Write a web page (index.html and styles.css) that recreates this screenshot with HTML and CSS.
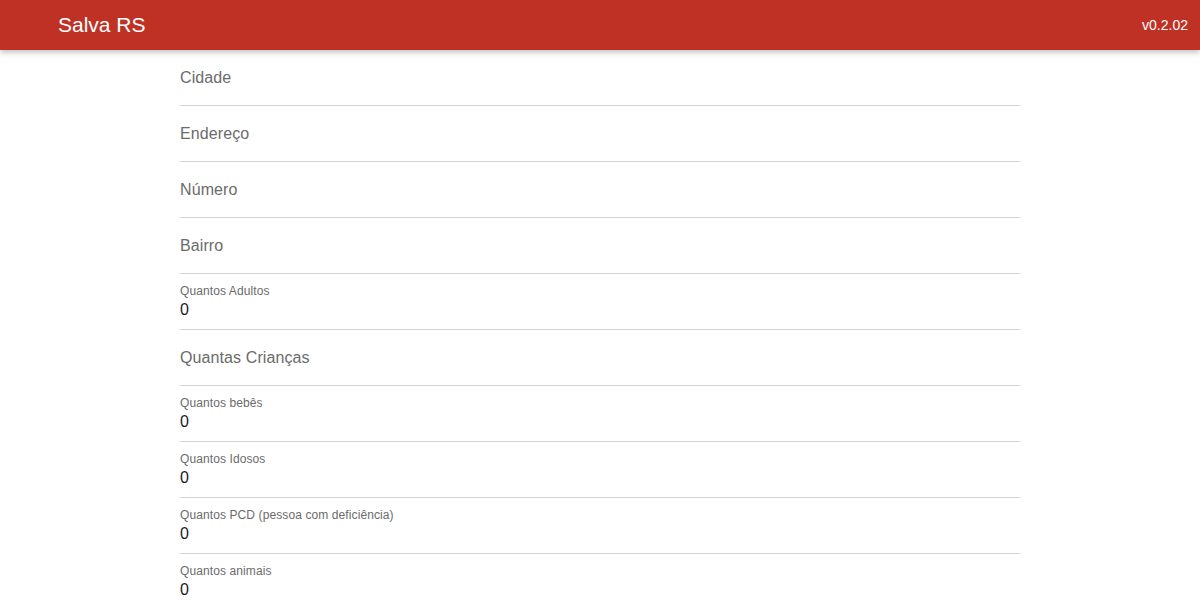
FILE: index.html
```html
<!DOCTYPE html>
<html lang="pt-BR">
<head>
<meta charset="utf-8">
<title>Salva RS</title>
<link rel="stylesheet" href="styles.css">
</head>
<body>
<header class="appbar">
  <h1 class="title">Salva RS</h1>
  <span class="version">v0.2.02</span>
</header>
<main class="form">
  <div class="field"><span class="placeholder">Cidade</span></div>
  <div class="field"><span class="placeholder">Endereço</span></div>
  <div class="field"><span class="placeholder">Número</span></div>
  <div class="field"><span class="placeholder">Bairro</span></div>
  <div class="field filled"><span class="label">Quantos Adultos</span><span class="value">0</span></div>
  <div class="field"><span class="placeholder">Quantas Crianças</span></div>
  <div class="field filled"><span class="label">Quantos bebês</span><span class="value">0</span></div>
  <div class="field filled"><span class="label">Quantos Idosos</span><span class="value">0</span></div>
  <div class="field filled"><span class="label">Quantos PCD (pessoa com deficiência)</span><span class="value">0</span></div>
  <div class="field filled"><span class="label">Quantos animais</span><span class="value">0</span></div>
</main>
</body>
</html>
```
FILE: styles.css
```css
html, body {
  margin: 0;
  padding: 0;
  background: #ffffff;
  font-family: "Liberation Sans", Arial, Helvetica, sans-serif;
}

.appbar {
  height: 50px;
  background: #bf3125;
  color: #ffffff;
  display: flex;
  align-items: center;
  justify-content: space-between;
  padding: 0 12px 0 58px;
  box-shadow: 0 2px 6px rgba(0, 0, 0, 0.28);
  position: relative;
  z-index: 1;
}

.title {
  margin: 0;
  font-size: 21px;
  font-weight: 400;
  line-height: 24px;
}

.version {
  font-size: 14px;
  line-height: 18px;
}

.form {
  width: 840px;
  margin: 0 auto;
  display: flex;
  flex-direction: column;
}

.field {
  height: 55px;
  border-bottom: 1px solid #d2d2d2;
  display: flex;
  flex-direction: column;
}

.placeholder {
  padding-top: 18px;
  font-size: 16px;
  line-height: 20px;
  letter-spacing: 0.1px;
  color: #6b6b6b;
}

.label {
  padding-top: 10px;
  font-size: 12px;
  line-height: 14px;
  letter-spacing: 0.1px;
  color: #6b6b6b;
}

.value {
  margin-top: 2px;
  font-size: 16px;
  line-height: 20px;
  color: #1a1a1a;
}
```
